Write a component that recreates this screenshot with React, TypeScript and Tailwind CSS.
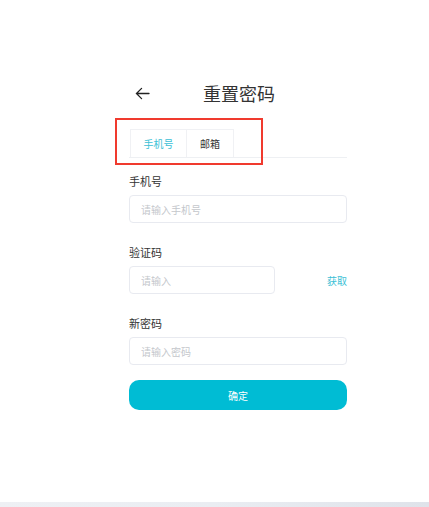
import React from 'react';

const Field = ({ label, placeholder, short, extra }: { label: string; placeholder: string; short?: boolean; extra?: React.ReactNode }) => (
  <div>
    <div className="text-[11px] leading-[14px] text-[#333]">{label}</div>
    <div className="mt-[7px] flex items-center justify-between">
      <input
        placeholder={placeholder}
        className={`${short ? 'w-[146px]' : 'w-[218px]'} h-[28px] rounded-[4px] border border-[#e8eaf0] px-[11px] text-[10px] placeholder:text-[#c4c7cc] outline-none`}
      />
      {extra}
    </div>
  </div>
);

export default function App() {
  return (
    <div className="relative h-[507px] w-[429px] overflow-hidden bg-white font-['Noto_Sans_CJK_SC',sans-serif]">
      <div className="ml-[129px] w-[218px] pt-[80px]">
        {/* header */}
        <div className="flex h-[26px] items-center">
          <svg width="15" height="13" viewBox="0 0 16 14" className="ml-[6px]" fill="none" stroke="#222" strokeWidth="1.4" strokeLinecap="round">
            <path d="M15 7H1.5M7 1.5 1.5 7 7 12.5" />
          </svg>
          <h1 className="ml-[53px] text-[18px] leading-[26px] text-[#333]">重置密码</h1>
        </div>

        {/* tabs */}
        <div className="relative mt-[13px]">
          <div className="absolute left-[-14px] top-[-1px] h-[47px] w-[148px] border-2 border-[#f03a2e]" />
          <div className="flex border-b border-[#eef0f3] pt-[10px] pl-[1px]">
            <div className="flex h-[28px] w-[57px] items-center justify-center border border-b-0 border-[#f0f1f4] text-[10px] text-[#3cbfd6]">手机号</div>
            <div className="flex h-[28px] w-[47px] items-center justify-center border border-b-0 border-l-0 border-[#f0f1f4] text-[10px] text-[#333]">邮箱</div>
          </div>
        </div>

        <div className="mt-[16px] flex flex-col gap-[22px]">
          <Field label="手机号" placeholder="请输入手机号" />
          <Field
            label="验证码"
            placeholder="请输入"
            short
            extra={<span className="text-[10px] text-[#3cbfd6]">获取</span>}
          />
          <Field label="新密码" placeholder="请输入密码" />
        </div>

        <button className="mt-[15px] h-[30px] w-[218px] rounded-[10px] bg-[#00bcd4] text-[10px] text-white">确定</button>
      </div>

      <div className="absolute bottom-0 left-0 h-[5px] w-full bg-gradient-to-r from-[#eef0f4] via-[#eaedf2] to-[#dfe3ea]" />
    </div>
  );
}
